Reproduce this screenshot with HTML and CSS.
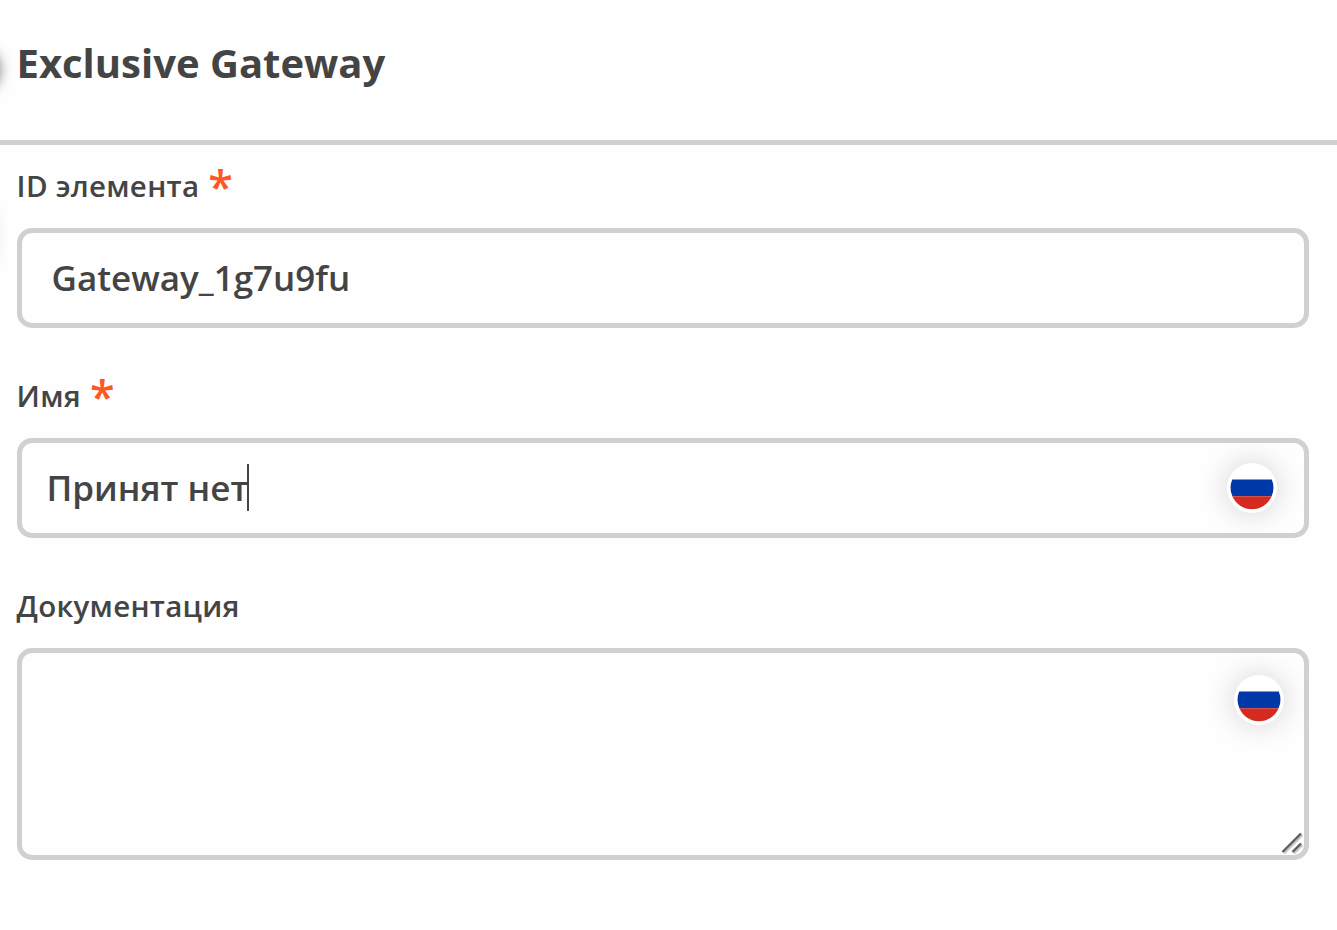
FILE: index.html
```html
<!DOCTYPE html>
<html lang="ru">
<head>
<meta charset="utf-8">
<title>Exclusive Gateway</title>
<link rel="stylesheet" href="styles.css">
</head>
<body>
<main class="panel">
  <span class="toggle-shadow"></span>
  <span class="edge-shadow"></span>
  <header class="panel-header"><h1 class="title">Exclusive Gateway</h1></header>
  <form class="form">
    <section class="field">
      <div class="label"><span class="label-text">ID элемента</span><span class="required">*</span></div>
      <div class="control control-id"><span class="value">Gateway_1g7u9fu</span></div>
    </section>
    <section class="field">
      <div class="label"><span class="label-text">Имя</span><span class="required">*</span></div>
      <div class="control control-name">
        <span class="value">Принят нет</span><span class="caret"></span>
        <span class="flag"><svg viewBox="0 0 50 50"><path fill="#0038a8" d="M5.2 16.6H44.8A21.3 21.3 0 0 1 44.6 33.2H5.4A21.3 21.3 0 0 1 5.2 16.6Z"/><path fill="#d52b1e" d="M5.4 33.2H44.6A21.3 21.3 0 0 1 5.4 33.2Z"/></svg></span>
      </div>
    </section>
    <section class="field">
      <div class="label"><span class="label-text">Документация</span></div>
      <div class="control control-doc">
        <span class="flag"><svg viewBox="0 0 50 50"><path fill="#0038a8" d="M5.2 16.6H44.8A21.3 21.3 0 0 1 44.6 33.2H5.4A21.3 21.3 0 0 1 5.2 16.6Z"/><path fill="#d52b1e" d="M5.4 33.2H44.6A21.3 21.3 0 0 1 5.4 33.2Z"/></svg></span>
        <svg class="grip" viewBox="0 0 22 22"><path d="M3 21.5 21.5 3M13 21.5 21.5 13" stroke="#c4c4c4" stroke-width="2"/><path d="M1.5 20 20 1.5M11.5 20 20 11.5" stroke="#5c5c5c" stroke-width="2.4"/></svg>
      </div>
    </section>
  </form>
</main>
</body>
</html>
```
FILE: styles.css
```css
* { box-sizing: border-box; }
body {
  margin: 0;
  background: #fefefe;
  color: #444;
  font-family: "Open Sans", "Noto Sans", sans-serif;
}
.panel { position: relative; height: 930px; overflow: hidden; }
.toggle-shadow {
  position: absolute;
  left: -45px;
  top: 48px;
  width: 44px;
  height: 44px;
  border-radius: 50%;
  box-shadow: 0 0 14px rgba(0, 0, 0, .6);
}
.edge-shadow {
  position: absolute;
  left: -20px;
  top: 210px;
  width: 20px;
  height: 52px;
  box-shadow: 0 0 12px rgba(0, 0, 0, .05);
}
.panel-header {
  height: 145px;
  padding: 36px 17px 0 16.5px;
  border-bottom: 5px solid #d0d0d0;
}
.title { margin: 0; font-size: 40px; line-height: 54px; font-weight: 700; white-space: nowrap; }
.form { padding: 0 28px 0 17px; }
.field { display: flex; flex-direction: column; height: 210px; }
.label { display: flex; flex: none; height: 83px; padding-top: 21px; }
.label-text { font-size: 29.5px; line-height: 40px; font-weight: 600; letter-spacing: .27px; margin-left: -.4px; white-space: nowrap; }
.required { margin-left: 9px; font-size: 45px; line-height: 60px; height: 40px; margin-top: -10px; color: #ff5722; font-weight: 600; }
.control {
  position: relative;
  display: flex;
  align-items: center;
  flex: none;
  height: 100px;
  border: 5px solid #d0d0d0;
  border-radius: 15px;
}
.value { font-size: 35px; line-height: 48px; font-weight: 600; white-space: nowrap; }
.control-id { padding-left: 29.5px; }
.control-name { padding-left: 24.5px; }
.control-doc { height: 212px; }
.caret { width: 2px; height: 47px; margin-left: -1.5px; margin-top: -2px; background: #444; }
.flag {
  position: absolute;
  top: 20px;
  right: 27px;
  width: 50px;
  height: 50px;
  border-radius: 50%;
  background: #fff;
  box-shadow: 0 0 30px rgba(0, 0, 0, .18);
}
.flag svg { display: block; width: 50px; height: 50px; }
.control-doc .flag { top: 22px; right: 20px; }
.grip { position: absolute; right: 1px; bottom: 1px; width: 22px; height: 22px; }
```
